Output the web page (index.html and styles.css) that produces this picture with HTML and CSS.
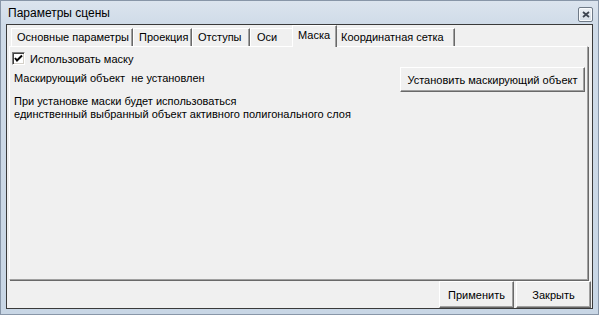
FILE: index.html
```html
<!DOCTYPE html>
<html>
<head>
<meta charset="utf-8">
<link rel="stylesheet" href="styles.css">
</head>
<body>
<div class="window">
  <div class="titlebar">
    <span class="title">Параметры сцены</span>
    <span class="close"><svg width="8" height="7" viewBox="0 0 8 7"><path d="M1 1L7 6M7 1L1 6" stroke="#3c4450" stroke-width="1.8"/></svg></span>
  </div>
  <div class="client">
    <div class="tabs">
      <div class="tab t1">Основные параметры</div>
      <div class="tab t2">Проекция</div>
      <div class="tab t3">Отступы</div>
      <div class="tab t4">Оси</div>
      <div class="tab active t5">Маска</div>
      <div class="tab t6">Координатная сетка</div>
    </div>
    <div class="panel">
      <label class="check-row">
        <span class="checkbox"><svg width="9" height="9" viewBox="0 0 9 9"><path d="M1 4L3 6.5L8 1.5" stroke="#000" stroke-width="2" fill="none"/></svg></span>
        <span>Использовать маску</span>
      </label>
      <div class="mask-row">
        <span class="status">Маскирующий объект&nbsp; не установлен</span>
        <button class="btn set-btn">Установить маскирующий объект</button>
      </div>
      <p class="hint">При установке маски будет использоваться<br>единственный выбранный объект активного полигонального слоя</p>
    </div>
    <div class="footer">
      <button class="btn foot-btn">Применить</button>
      <button class="btn foot-btn">Закрыть</button>
    </div>
  </div>
</div>
</body>
</html>
```

FILE: styles.css
```css
html, body {
  margin: 0;
  padding: 0;
}
body {
  width: 599px;
  height: 315px;
  overflow: hidden;
  font-family: "Liberation Sans", Arial, sans-serif;
  font-size: 11px;
  color: #000;
}
.window {
  box-sizing: border-box;
  width: 599px;
  height: 315px;
  border: 1px solid #8896a8;
  background: linear-gradient(to bottom, #dbe4ee 0px, #cfdbe8 24px, #c8d6e5 100%);
  display: flex;
  flex-direction: column;
}
.titlebar {
  height: 23px;
  display: flex;
  align-items: center;
  justify-content: space-between;
  padding: 0 5px 0 7px;
}
.title {
  font-size: 12px;
  color: #000;
}
.close {
  width: 15px;
  height: 15px;
  box-sizing: border-box;
  border: 1px solid #6f7a87;
  border-radius: 2px;
  background: linear-gradient(#eef2f6, #d3dce6);
  box-shadow: inset 0 0 0 1px #f8fafc;
  display: flex;
  align-items: center;
  justify-content: center;
  margin-top: 4px;
}
.client {
  flex: 1;
  margin: 0 5px 5px 5px;
  border: 1px solid #3a3a3a;
  background: #f0f0f0;
  display: flex;
  flex-direction: column;
}
.tabs {
  display: flex;
  align-items: flex-end;
  height: 21px;
  margin: 0 0 0 4px;
  position: relative;
  z-index: 1;
}
.tab {
  box-sizing: border-box;
  height: 18px;
  border-top: 1px solid #fff;
  border-left: 1px solid #fff;
  border-right: 1px solid #696969;
  box-shadow: inset -1px 0 0 #a0a0a0;
  padding: 2px 5px 0 5px;
  white-space: nowrap;
  background: #f0f0f0;
}
.t1 { width: 122px; }
.t2 { width: 59px; }
.t3 { width: 58px; }
.t4 { width: 44px; padding-left: 6px; }
.t6 { width: 120px; }
.tab.active {
  width: 45px;
  margin: 0 -2px -1px -2px;
  padding-top: 3px;
  padding-left: 5px;
  height: 22px;
  position: relative;
  z-index: 2;
}
.panel {
  box-sizing: border-box;
  margin: 0 4px 0 2px;
  height: 234px;
  border-top: 1px solid #fff;
  border-left: 1px solid #fff;
  border-right: 1px solid #a0a0a0;
  border-bottom: 1px solid #a0a0a0;
  box-shadow: 1px 1px 0 #696969;
  padding: 4px 0 0 2px;
  display: flex;
  flex-direction: column;
}
.check-row {
  display: flex;
  align-items: center;
  height: 15px;
}
.checkbox {
  box-sizing: border-box;
  width: 13px;
  height: 13px;
  background: #fff;
  border-top: 1px solid #808080;
  border-left: 1px solid #808080;
  border-right: 1px solid #fff;
  border-bottom: 1px solid #fff;
  box-shadow: inset 1px 1px 0 #404040, inset -1px -1px 0 #d4d0c8;
  display: flex;
  align-items: center;
  justify-content: center;
  margin-right: 5px;
}
.mask-row {
  display: flex;
  justify-content: space-between;
  align-items: flex-start;
  margin-top: 1px;
  padding-left: 2px;
}
.status {
  margin-top: 5px;
}
.btn {
  font-family: "Liberation Sans", Arial, sans-serif;
  font-size: 11px;
  color: #000;
  background: #f0f0f0;
  border-top: 1px solid #fff;
  border-left: 1px solid #fff;
  border-right: 1px solid #696969;
  border-bottom: 1px solid #696969;
  box-shadow: inset -1px -1px 0 #a0a0a0;
  padding: 0;
  margin: 0;
  border-radius: 0;
}
.set-btn {
  width: 185px;
  height: 25px;
  margin-right: 2px;
}
.hint {
  margin: 3px 0 0 2px;
  line-height: 13px;
}
.footer {
  display: flex;
  justify-content: flex-end;
  gap: 2px;
  padding: 1px 1px 0 0;
}
.foot-btn {
  width: 75px;
  height: 27px;
}
```
